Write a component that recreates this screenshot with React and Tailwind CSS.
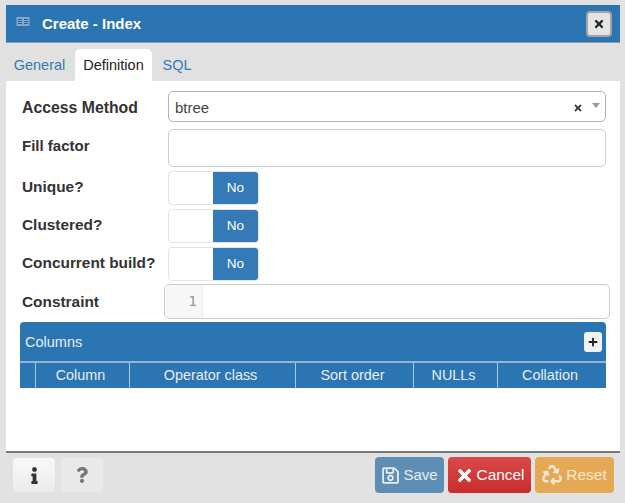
import React from 'react';
import { FaRegSave, FaTimes, FaRecycle, FaInfo, FaQuestion, FaPlus } from 'react-icons/fa';

const SwitchRow = ({ label }) => (
  <div className="flex items-center mt-[4px]">
    <div className="w-[162px] pl-[16px] pb-[2px] text-[15.4px] font-bold text-[#333] leading-none">{label}</div>
    <div className="flex w-[91px] h-[34px] rounded-[4px] border border-[#e4e4e4] overflow-hidden bg-white">
      <div className="w-[44px]" />
      <div className="flex-1 bg-[#337ab7] text-white text-[13.5px] flex items-center justify-center">No</div>
    </div>
  </div>
);

const ColumnHead = ({ className, children }) => (
  <div className={`flex items-center justify-center pr-[4px] ${className}`}>{children}</div>
);

const App = () => {
  return (
    <div className="w-[625px] h-[503px] bg-[#e2e2e2] pt-[5px] pl-[6px] pr-[5px] pb-[6px] overflow-hidden font-['Liberation_Sans',sans-serif]">
      <div className="h-full flex flex-col bg-white">
        {/* title bar */}
        <div className="h-[38px] bg-[#2c75b3] border-b border-[#8a9aa8] flex items-center pl-[10px] pr-[8px] shrink-0">
          <svg width="14" height="11" viewBox="0 0 14 11" className="mr-[12px] mt-[-4px]">
            <rect x="0.5" y="1" width="13" height="9" fill="#7fa9d0" />
            <path d="M2 3.5h4M2 5.5h4M2 7.5h4M8 3.5h4M8 5.5h4M8 7.5h4" stroke="#2c5f90" strokeWidth="1" />
          </svg>
          <span className="text-white font-bold text-[15px] leading-none">Create - Index</span>
          <button className="ml-auto w-[26px] h-[26px] rounded-[4px] bg-[#e4e4e4] border-2 border-[#a3a3a3] flex items-center justify-center text-[#222]">
            <FaTimes size={12} />
          </button>
        </div>

        {/* tabs */}
        <div className="h-[38px] bg-[#e1e1e1] flex items-end shrink-0 text-[14.5px]">
          <div className="w-[67px] h-[32px] pt-[2px] flex items-center justify-center text-[#337ab7]">General</div>
          <div className="ml-[2px] w-[77px] h-[32px] pt-[2px] bg-white rounded-t-[5px] flex items-center justify-center text-[#222]">Definition</div>
          <div className="w-[50px] h-[32px] pt-[2px] flex items-center justify-center text-[#337ab7]">SQL</div>
        </div>

        {/* form */}
        <div className="flex-1 flex flex-col pt-[10px] min-h-0">
          <div className="flex items-center h-[31px]">
            <div className="w-[162px] pl-[16px] pt-[2px] text-[15.8px] font-bold text-[#333] leading-none">Access Method</div>
            <div className="w-[438px] h-[31px] border border-[#b5b5b5] rounded-[5px] flex items-center pl-[6px] pr-[5px] pt-[3px] text-[15px] text-[#444]">
              <span>btree</span>
              <FaTimes size={10} className="ml-auto text-[#333]" />
              <span className="ml-[9px] mb-[6px] w-0 h-0 border-x-[4px] border-x-transparent border-t-[5px] border-t-[#999]" />
            </div>
          </div>

          <div className="flex items-start h-[38px] mt-[7px]">
            <div className="w-[162px] pl-[16px] pt-[9px] text-[15px] font-bold text-[#333] leading-none">Fill factor</div>
            <div className="w-[438px] h-[38px] border border-[#ccc] rounded-[5px]" />
          </div>

          <SwitchRow label="Unique?" />
          <SwitchRow label="Clustered?" />
          <SwitchRow label="Concurrent build?" />

          <div className="flex items-center h-[35px] mt-[3px]">
            <div className="w-[158px] pl-[16px] text-[15.4px] font-bold text-[#333] leading-none">Constraint</div>
            <div className="w-[446px] h-[35px] border border-[#ccc] rounded-[5px] flex overflow-hidden">
              <div className="w-[38px] bg-[#f7f7f7] border-r border-[#eee] flex items-center justify-end pr-[5px] text-[14.5px] text-[#999] font-['DejaVu_Sans_Mono',monospace]">1</div>
            </div>
          </div>

          {/* columns grid */}
          <div className="ml-[14px] w-[586px] mt-[3px]">
            <div className="h-[39px] bg-[#2c75b3] rounded-t-[4px] flex items-center pl-[5px] pr-[4px] text-[14.5px] text-[#e6eef6]">
              <span className="pt-[2px]">Columns</span>
              <button className="ml-auto w-[18px] h-[20px] bg-[#f2f2f2] rounded-[3px] flex items-center justify-center text-[#222]">
                <FaPlus size={10} />
              </button>
            </div>
            <div className="h-[27px] bg-[#2c75b3] border-t-2 border-[#8fb6d8] flex text-[14.4px] text-[#e6eef6]">
              <div className="w-[16px] border-r border-[#a9c8e2]" />
              <ColumnHead className="w-[94px] border-r border-[#a9c8e2]">Column</ColumnHead>
              <ColumnHead className="w-[166px] border-r border-[#a9c8e2]">Operator class</ColumnHead>
              <ColumnHead className="w-[118px] border-r border-[#a9c8e2]">Sort order</ColumnHead>
              <ColumnHead className="w-[84px] border-r border-[#a9c8e2]">NULLs</ColumnHead>
              <ColumnHead className="flex-1">Collation</ColumnHead>
            </div>
          </div>
        </div>

        {/* footer */}
        <div className="h-[46px] bg-[#e2e2e2] border-t-2 border-[#777] flex items-center pl-[7px] pr-[6px] shrink-0">
          <button className="w-[42px] h-[34px] rounded-[4px] bg-linear-to-b from-[#f8f8f8] to-[#ececec] flex items-center justify-center text-[#333]">
            <FaInfo size={17} />
          </button>
          <button className="w-[42px] h-[34px] ml-[6px] rounded-[4px] bg-[#e9e9e9] flex items-center justify-center text-[#777]">
            <FaQuestion size={16} />
          </button>
          <button className="ml-auto w-[69px] h-[36px] rounded-[4px] bg-[#5f8eb5] flex items-center justify-center gap-[3px] text-[15px] text-[#e6edf3]">
            <FaRegSave size={19} />Save
          </button>
          <button className="ml-[4px] w-[83px] h-[36px] rounded-[4px] bg-linear-to-b from-[#d94a4a] to-[#c72c2c] flex items-center justify-center gap-[3px] text-[15.4px] text-white">
            <FaTimes size={19} />Cancel
          </button>
          <button className="ml-[4px] w-[79px] h-[36px] rounded-[4px] bg-[#e5a955] flex items-center justify-center gap-[4px] text-[15.5px] text-[#f6e8d3]">
            <FaRecycle size={20} />Reset
          </button>
        </div>
      </div>
    </div>
  );
};

export default App;
